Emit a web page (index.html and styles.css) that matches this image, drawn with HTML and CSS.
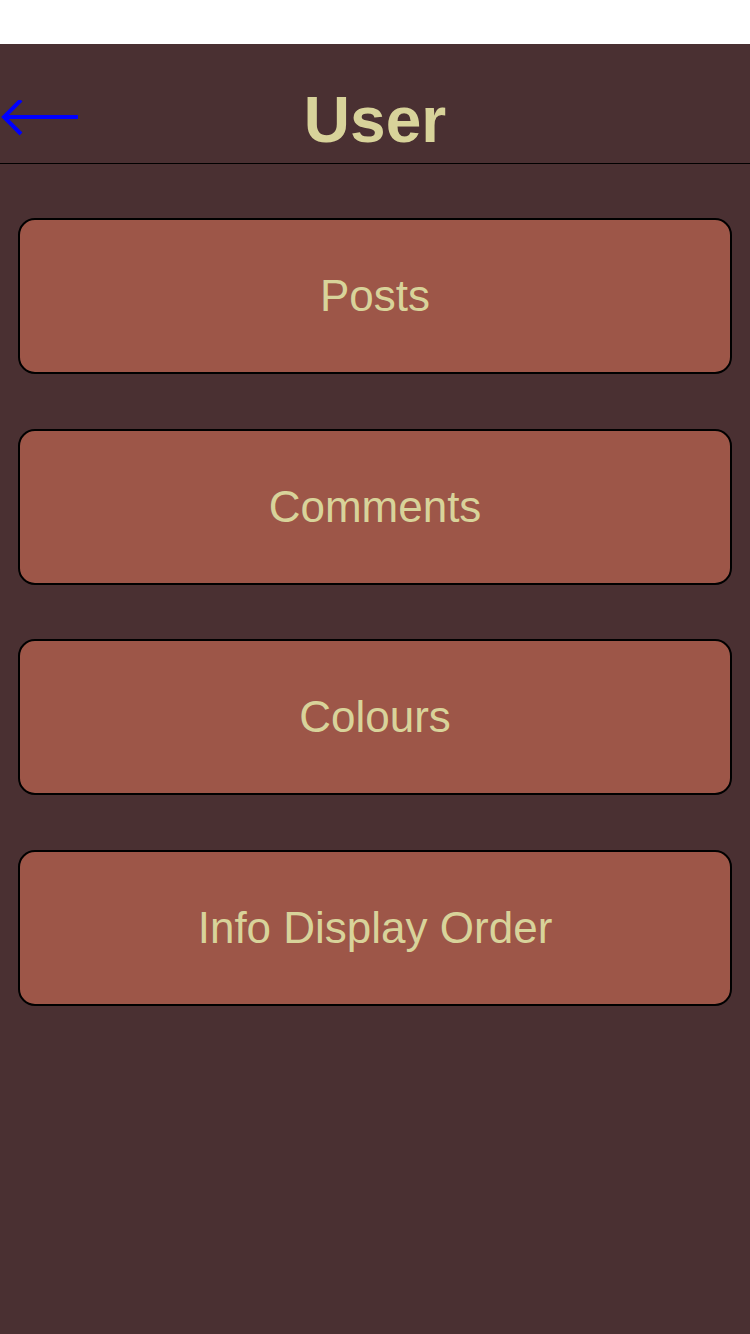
FILE: index.html
```html
<!DOCTYPE html>
<html>
<head>
<meta charset="utf-8">
<link rel="stylesheet" href="styles.css">
</head>
<body>
<div class="status"></div>
<div class="screen">
  <header class="header">
    <button class="back" aria-label="Back">
      <svg width="80" height="40" viewBox="0 0 80 40">
        <path d="M78 17 H4 M21 0 L4 17 L21 34" fill="none" stroke="#0000ff" stroke-width="4"/>
      </svg>
    </button>
    <h1 class="title">User</h1>
  </header>
  <nav class="menu">
    <div class="item">Posts</div>
    <div class="item">Comments</div>
    <div class="item">Colours</div>
    <div class="item">Info Display Order</div>
  </nav>
</div>
</body>
</html>
```
FILE: styles.css
```css
html, body {
  margin: 0;
  padding: 0;
  height: 100%;
}
body {
  background: #4a3032;
  font-family: "Liberation Sans", Arial, sans-serif;
  display: flex;
  flex-direction: column;
}
.status {
  height: 44px;
  background: #ffffff;
  flex: none;
}
.screen {
  flex: 1;
  background: #4a3032;
}
.header {
  position: relative;
  height: 119px;
  border-bottom: 1.5px solid #000;
  display: flex;
  align-items: center;
  justify-content: center;
}
.back {
  position: absolute;
  left: 0;
  top: 56px;
  padding: 0;
  margin: 0;
  border: 0;
  background: none;
  line-height: 0;
}
.title {
  margin: 32px 0 0 0;
  font-size: 64px;
  font-weight: bold;
  color: #d8d39a;
  line-height: 1;
}
.menu {
  display: flex;
  flex-direction: column;
  gap: 54.5px;
  padding: 54px 18px 0 18px;
}
.item {
  height: 152px;
  border: 2px solid #000;
  border-radius: 17px;
  background: #9d5648;
  color: #d8d39a;
  font-size: 44px;
  display: flex;
  align-items: center;
  justify-content: center;
}
```
